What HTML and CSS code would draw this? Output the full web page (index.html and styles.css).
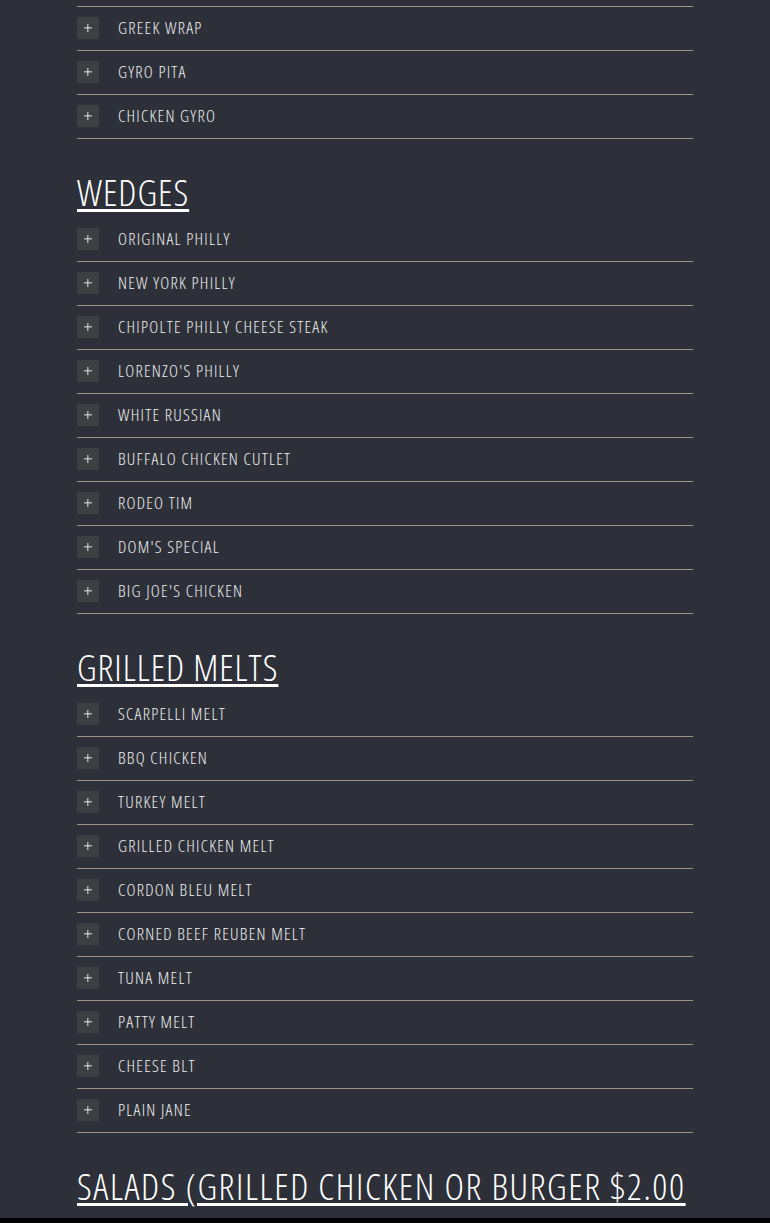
FILE: index.html
```html
<!DOCTYPE html>
<html>
<head>
<meta charset="utf-8">
<link rel="stylesheet" href="styles.css">
</head>
<body>
<div class="page">
  <div class="top-edge"></div>
  <ul class="menu">
    <li class="item"><span class="toggle"></span><span class="name">GREEK WRAP</span></li>
    <li class="item"><span class="toggle"></span><span class="name">GYRO PITA</span></li>
    <li class="item"><span class="toggle"></span><span class="name">CHICKEN GYRO</span></li>
  </ul>
  <h2 class="heading">WEDGES</h2>
  <ul class="menu">
    <li class="item"><span class="toggle"></span><span class="name">ORIGINAL PHILLY</span></li>
    <li class="item"><span class="toggle"></span><span class="name">NEW YORK PHILLY</span></li>
    <li class="item"><span class="toggle"></span><span class="name">CHIPOLTE PHILLY CHEESE STEAK</span></li>
    <li class="item"><span class="toggle"></span><span class="name">LORENZO'S PHILLY</span></li>
    <li class="item"><span class="toggle"></span><span class="name">WHITE RUSSIAN</span></li>
    <li class="item"><span class="toggle"></span><span class="name">BUFFALO CHICKEN CUTLET</span></li>
    <li class="item"><span class="toggle"></span><span class="name">RODEO TIM</span></li>
    <li class="item"><span class="toggle"></span><span class="name">DOM'S SPECIAL</span></li>
    <li class="item"><span class="toggle"></span><span class="name">BIG JOE'S CHICKEN</span></li>
  </ul>
  <h2 class="heading">GRILLED MELTS</h2>
  <ul class="menu">
    <li class="item"><span class="toggle"></span><span class="name">SCARPELLI MELT</span></li>
    <li class="item"><span class="toggle"></span><span class="name">BBQ CHICKEN</span></li>
    <li class="item"><span class="toggle"></span><span class="name">TURKEY MELT</span></li>
    <li class="item"><span class="toggle"></span><span class="name">GRILLED CHICKEN MELT</span></li>
    <li class="item"><span class="toggle"></span><span class="name">CORDON BLEU MELT</span></li>
    <li class="item"><span class="toggle"></span><span class="name">CORNED BEEF REUBEN MELT</span></li>
    <li class="item"><span class="toggle"></span><span class="name">TUNA MELT</span></li>
    <li class="item"><span class="toggle"></span><span class="name">PATTY MELT</span></li>
    <li class="item"><span class="toggle"></span><span class="name">CHEESE BLT</span></li>
    <li class="item"><span class="toggle"></span><span class="name">PLAIN JANE</span></li>
  </ul>
  <h2 class="heading heading-wide">SALADS (GRILLED CHICKEN OR BURGER $2.00</h2>
</div>
<div class="bottom-bar"></div>
</body>
</html>
```
FILE: styles.css
```css
html, body {
  margin: 0;
  padding: 0;
  background: #2d3039;
  height: 100%;
  overflow: hidden;
}
body {
  font-family: "Open Sans", "Roboto", sans-serif;
  font-stretch: condensed;
  font-weight: 300;
  color: #eeeeee;
}
.page {
  width: 616px;
  margin-left: 77px;
}
.top-edge {
  height: 6px;
  border-bottom: 1px solid #9d9283;
}
.menu {
  list-style: none;
  margin: 0;
  padding: 0;
}
.item {
  height: 43px;
  border-bottom: 1px solid #9d9283;
  display: flex;
  align-items: center;
}
.toggle {
  width: 22px;
  height: 22px;
  background: #3e3f43;
  position: relative;
  flex: none;
  margin-top: -1px;
}
.toggle::before,
.toggle::after {
  content: "";
  position: absolute;
  background: #e6e6e6;
  left: 50%;
  top: 50%;
}
.toggle::before {
  width: 8px;
  height: 1.3px;
  transform: translate(-50%, -50%);
}
.toggle::after {
  width: 1.3px;
  height: 8px;
  transform: translate(-50%, -50%);
}
.name {
  margin-left: 19px;
  margin-top: -2px;
  font-size: 17px;
  line-height: 20px;
  font-weight: 350;
  letter-spacing: 1.25px;
  color: #f2f2f2;
}
.heading {
  margin: 33px 0 6px;
  font-size: 37px;
  line-height: 40px;
  font-weight: 300;
  letter-spacing: 1px;
  color: #ffffff;
  text-decoration: underline;
  text-decoration-thickness: 3px;
  text-underline-offset: 3px;
}
.heading-wide {
  white-space: nowrap;
  letter-spacing: 1.6px;
}
.bottom-bar {
  position: fixed;
  left: 0;
  right: 0;
  bottom: 0;
  height: 5px;
  background: #000;
}
```
